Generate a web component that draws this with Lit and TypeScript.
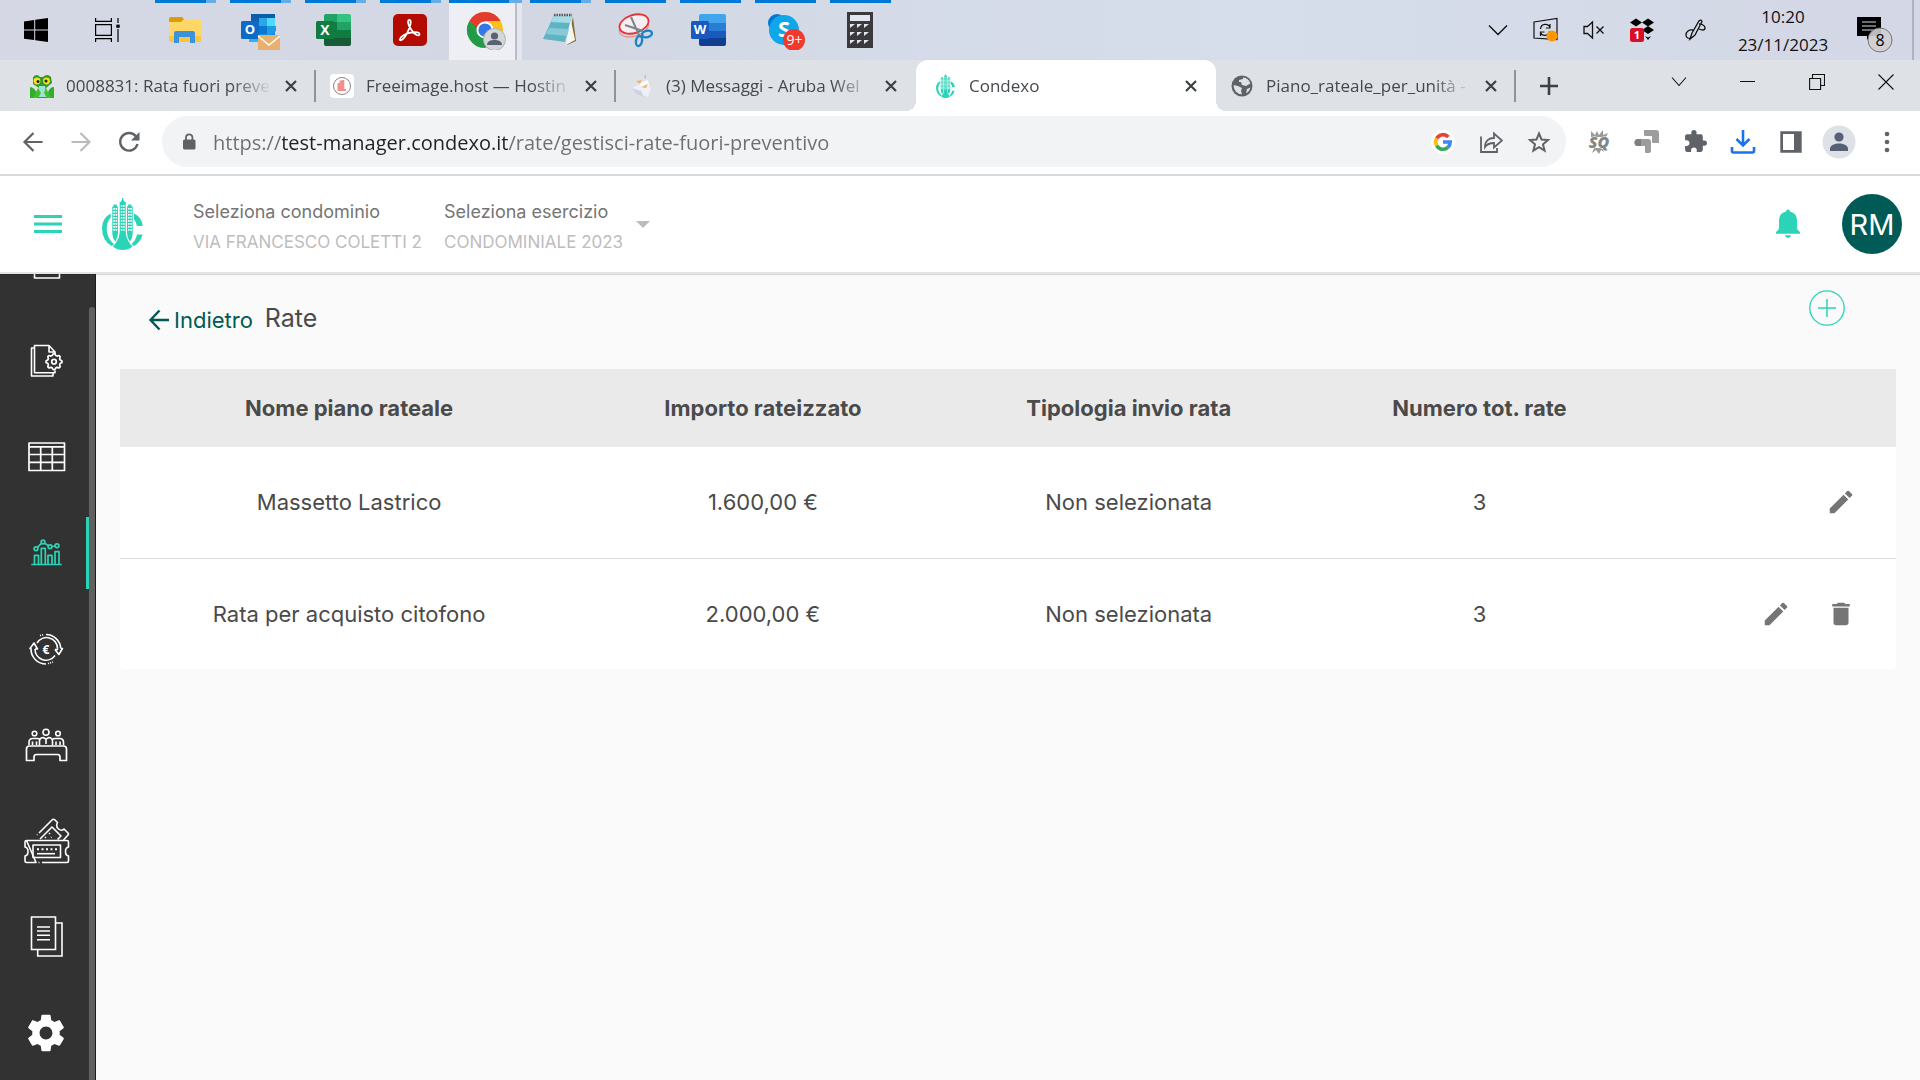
import { LitElement, html, css, svg, nothing, TemplateResult } from "lit";
import { customElement, property } from "lit/decorators.js";

/* ---------- taskbar pictograms (40 x 40) ---------- */

const windowsLogo = html`<svg width="24" height="24" viewBox="0 0 24 24"><path d="M0 3.400 10.200 2v9.500H0zM11.200 1.800 24 0v11.500H11.200zM0 12.500h10.200v9.600L0 20.700zM11.200 12.500H24V24l-12.800-1.800z"/></svg>`;

const taskView = html`<svg width="26" height="24" viewBox="0 0 26 24" fill="none" stroke="#000" stroke-width="1.200"><path d="M.6 0v3.400h15.800V0M.6 24v-3.400h15.800V24M.6 6.600h15.800v10.800H.6zM23 0v5M23 11v13"/><path d="M21.300 6.600h3.400v3.200h-3.400z" fill="#000" stroke="none"/></svg>`;

const folder = html`<svg width="40" height="40" viewBox="0 0 40 40"><path d="M4 9q0-2 2-2h11l2 2v5H4z" fill="#dd9b0b"/><path d="M4 12h12l3-3h15q2 0 2 2v19q0 2-2 2H6q-2 0-2-2z" fill="#ffd766"/><path d="M4 26h32v4q0 2-2 2H6q-2 0-2-2z" fill="#fcc53f"/><path d="M9 33V23q0-2 2-2h17q2 0 2 2v10h-5v-6H14v6z" fill="#3c93dd"/></svg>`;

const outlook = html`<svg width="40" height="40" viewBox="0 0 40 40"><path d="M11 4h24v28H9V17h2z" fill="#1490df"/><path d="M11 4h24v4H11z" fill="#0a5ea8"/><path d="M11 8h8v8h-8z" fill="#0f5fae"/><path d="M19 8h8v8h-8z" fill="#28a8ea"/><path d="M27 8h8v8h-8z" fill="#50d9ff"/><path d="M19 16h8v8h-8z" fill="#0b78d0"/><path d="M27 16h9v5l-9 6z" fill="#1f9be6"/><path d="M9 24h10v8H9z" fill="#30b4ef"/><rect x="1" y="11" width="18" height="18" rx="1.500" fill="#0d6ac6"/><text x="10" y="24" text-anchor="middle" font-size="13" font-weight="700" fill="#fff" font-family="Open Sans, sans-serif">O</text><path d="M18 25h22v16H18z" fill="#e8b06c"/><path d="m18 26 11 9 11-9" fill="none" stroke="#fff" stroke-width="1.500"/></svg>`;

const excel = html`<svg width="40" height="40" viewBox="0 0 40 40"><path d="M11 4h13v8H9V6q0-2 2-2z" fill="#21a366"/><path d="M22 4h12q2 0 2 2v6H22z" fill="#33c481"/><path d="M9 12h13v8H9z" fill="#107c41"/><path d="M22 12h14v8H22z" fill="#21a366"/><path d="M9 20h27v8H9z" fill="#107c41"/><path d="M9 28h27v6q0 2-2 2H11q-2 0-2-2z" fill="#185c37"/><rect x="1" y="11" width="18" height="18" rx="1.500" fill="#107c41"/><text x="10" y="24.500" text-anchor="middle" font-size="14" font-weight="700" fill="#fff" font-family="Open Sans, sans-serif">X</text></svg>`;

const acrobat = html`<svg width="40" height="40" viewBox="0 0 40 40"><rect x="3" y="4" width="34" height="32" rx="5" fill="#b30b00"/><path d="M20 9c-3 0-1 6 2 10 3 5 8 7 8 4s-12-2-17 2c-4 3-3 5-1 4 4-2 8-11 9-16 .5-3 0-4-1-4z" fill="none" stroke="#fff" stroke-width="1.800" transform="translate(-.5 1)"/></svg>`;

const chrome = html`<svg width="40" height="40" viewBox="0 0 40 40"><circle cx="19" cy="20" r="18" fill="#fbc116"/><path d="M3.400 11A18 18 0 0 0 19 38l8-13.500H11z" fill="#219a4a"/><path d="M3.400 11A18 18 0 0 1 34.600 11H19v9l-6-3z" fill="#e33b2e"/><path d="M3.400 11 11.200 24.500l3-8z" fill="#219a4a"/><path d="M4 10.500 11.500 20 19 11z" fill="#e33b2e"/><path d="M3.400 11 11.200 24.500l1-5z" fill="#219a4a"/><circle cx="19" cy="20" r="8.500" fill="#fff"/><circle cx="19" cy="20" r="6.600" fill="#3278e8"/><circle cx="28.500" cy="29.500" r="11" fill="#d4d6d8" stroke="#aeb1b5" stroke-width="1"/><circle cx="28.500" cy="26" r="3.600" fill="#586273"/><path d="M21 35c0-4 4-5 7.500-5s7.500 1 7.500 5z" fill="#586273"/></svg>`;

const notepad = html`<svg width="40" height="40" viewBox="0 0 40 40"><path d="m33 7 3 24-9 4z" fill="#8a6a2e"/><path d="m30 6 5 24-9 5z" fill="#f2f5f6"/><path d="M14 5h18l-7 27-22-3z" fill="#5fb4c4"/><path d="M14 5h18l-2 8-19-1z" fill="#a4dbe4"/><path d="M9 18 29 19l-2 7-21-2z" fill="#85cad6"/><path d="M14 5h18" stroke="#555" stroke-width="2.500" stroke-dasharray="1.500 1"/></svg>`;

const snipping = html`<svg width="40" height="40" viewBox="0 0 40 40" fill="none"><ellipse cx="19" cy="18" rx="15" ry="8" transform="rotate(-18 19 18)" stroke="#e98a8a" stroke-width="1.200"/><ellipse cx="19" cy="14" rx="15" ry="9" transform="rotate(-18 19 14)" fill="#f7eef2" stroke="#e33434" stroke-width="1.800"/><path d="m16 7 8 18M10 15l18 6" stroke="#7d858c" stroke-width="2"/><ellipse cx="24" cy="31" rx="3" ry="5" transform="rotate(12 24 31)" stroke="#1b82c5" stroke-width="2.400"/><ellipse cx="32" cy="24" rx="5" ry="3.200" transform="rotate(-15 32 24)" stroke="#1b82c5" stroke-width="2.400"/></svg>`;

const word = html`<svg width="40" height="40" viewBox="0 0 40 40"><path d="M11 4h23q2 0 2 2v7H9V6q0-2 2-2z" fill="#41a5ee"/><path d="M9 13h27v8H9z" fill="#2b7cd3"/><path d="M9 21h27v7H9z" fill="#185abd"/><path d="M9 28h27v6q0 2-2 2H11q-2 0-2-2z" fill="#103f91"/><rect x="1" y="11" width="18" height="18" rx="1.500" fill="#185abd"/><text x="10" y="24" text-anchor="middle" font-size="13" font-weight="700" fill="#fff" font-family="Open Sans, sans-serif">W</text></svg>`;

const skype = html`<svg width="40" height="40" viewBox="0 0 40 40"><circle cx="12" cy="13" r="9" fill="#0078d4"/><circle cx="26" cy="27" r="9" fill="#0078d4"/><circle cx="19" cy="20" r="15" fill="#10a7ea"/><text x="19" y="27" text-anchor="middle" font-size="22" font-weight="700" fill="#fff" font-family="Open Sans, sans-serif">S</text><circle cx="29" cy="30" r="11" fill="#f03a2e"/><text x="29.500" y="35" text-anchor="middle" font-size="14" fill="#fff" font-family="Open Sans, sans-serif">9+</text></svg>`;

const calculator = html`<svg width="40" height="40" viewBox="0 0 40 40"><path d="M7 2h26v36H7z" fill="#3a3a3c"/><path d="M10 5h20v6H10z" fill="#e3e6f0"/>${[14, 22, 30].map((y) => [10, 17, 24].map((x) => svg`<path d="M${x} ${y}h5l-5 4z" fill="#e3e6f0"/>`))}</svg>`;

/* ---------- notification area ---------- */

const trayChevron = html`<svg width="20" height="12" viewBox="0 0 20 12" fill="none" stroke="#111" stroke-width="1.400"><path d="m1 1.500 9 9 9-9"/></svg>`;
const traySync = html`<svg width="26" height="26" viewBox="0 0 26 26" fill="none" stroke="#111" stroke-width="1.200"><path d="M1 5 24 1.500v21L1 21z"/><path d="M7.500 12c.5-6 8-6 9.500-1.500M17 7v4h-4M16.500 14c-.5 5-7 6-9 1.500M7.500 19v-4h4"/><circle cx="19" cy="19" r="5.500" fill="#ff9800" stroke="none"/></svg>`;
const traySpeaker = html`<svg width="22" height="20" viewBox="0 0 22 20" fill="none" stroke="#111" stroke-width="1.300"><path d="M1 6.500h3.500L9.500 2v16l-5-4.500H1zM13.500 6.500l7 7M20.500 6.500l-7 7"/></svg>`;
const trayDropbox = html`<svg width="26" height="24" viewBox="0 0 26 24"><path d="m1 4.500 6-4 6 4-6 4zM13 4.500l6-4 6 4-6 4zM13 12l6-4 6 4-6 4zM16 18l3 1.500 3-1.500-3 4z"/><rect x="1" y="10" width="14" height="14" rx="2.500" fill="#d80f27"/><text x="8" y="21" text-anchor="middle" font-size="11" font-weight="700" fill="#fff" font-family="Open Sans, sans-serif">1</text></svg>`;
const trayPen = html`<svg width="22" height="22" viewBox="0 0 22 22" fill="none" stroke="#111" stroke-width="1.300"><path d="M5 20 7 14 14 2q2-2 3 .5L10 16zM14 5c5 0 6 3 6 4 0 3-4 2-6 1M8 11c-4-1-7 2-7 5s3 4 5 3"/></svg>`;
const trayNotes = html`<svg width="38" height="38" viewBox="0 0 38 38"><path d="M1 1h24v19H14l-3 4v-4H1z"/><path d="M6 6h14M6 10h14M6 14h14" stroke="#d6d9e5" stroke-width="1"/><circle cx="24" cy="24" r="12" fill="#cfcfd1" fill-opacity=".9" stroke="#777" stroke-width="1"/><text x="24" y="30" text-anchor="middle" font-size="16" fill="#000" font-family="Open Sans, sans-serif">8</text></svg>`;

/* ---------- browser icons ---------- */

const frog = html`<svg width="24" height="24" viewBox="0 0 24 24"><path d="M0 13q4 0 7 6l-1 5H0zM24 13q-4 0-6 5l1 6h5z" fill="#2faf2a"/><path d="M3 3q4-4 7 0h3q4-4 8 0l1 6-6 5 2 10H7l2-10-6-4z" fill="#2c9a2d"/><path d="M9 12h6l2 11H8z" fill="#9fe4d0"/><path d="m8 14 3 5-3 5H3zM16 14l-2 5 3 5h4z" fill="#3fc02f"/><circle cx="7" cy="7" r="3.400" fill="#f3e11c"/><circle cx="16.500" cy="7" r="3.400" fill="#f3e11c"/><circle cx="8" cy="7.500" r="1.500" fill="#222"/><circle cx="16" cy="7" r="1.500" fill="#222"/></svg>`;
const freeimage = html`<svg width="24" height="24" viewBox="0 0 24 24"><rect width="24" height="24" rx="4" fill="#fff"/><circle cx="12" cy="12" r="8.500" fill="none" stroke="#777" stroke-width=".9"/><path d="M7.500 9h2V6.500h2.300V6h2.500v9h1.700v2h-8.500z" fill="#f1918d"/></svg>`;
const aruba = html`<svg width="24" height="24" viewBox="0 0 24 24"><path d="M2 14 14 8l7 6-3 9-12-3z" fill="#eef0f7"/><path d="m2 14 9 3 3 6-8-3z" fill="#cdd3e3"/><path d="m10 9 8-3 1 6-8 1z" fill="#fff"/><path d="m6 7 6-1-2 4zM14 3l2-3v5zM11 13l7-3-2 4z" fill="#f0b273"/></svg>`;
const globe = html`<svg width="24" height="24" viewBox="0 0 24 24"><circle cx="12" cy="12" r="10.500" fill="#5f6368"/><path d="M13 3.500a8.500 8.500 0 0 1 7.300 6L16 12l-4-1-1-3h-2V6l4-1zM3.600 11l4.400 1 4 2-1 3 1 3.300A8.500 8.500 0 0 1 3.600 11zM20.400 13.500a8.500 8.500 0 0 1-4.400 5.800l1-4.300z" fill="#dee1e6"/></svg>`;

const closeGlyph = html`<svg width="12" height="12" viewBox="0 0 12 12" stroke="#3c4043" stroke-width="2.200"><path d="m1 1 10 10M11 1 1 11"/></svg>`;
const plusGlyph = html`<svg width="18" height="18" viewBox="0 0 18 18" stroke="#3c4043" stroke-width="2.600"><path d="M9 0v18M0 9h18"/></svg>`;
const winChevron = html`<svg width="16" height="16" viewBox="0 0 16 16" fill="none" stroke="#111" stroke-width="1.100"><path d="m1 3.500 7 8 7-8"/></svg>`;
const winMin = html`<svg width="16" height="16" viewBox="0 0 16 16" fill="none" stroke="#111"><path d="M0 7.500h15"/></svg>`;
const winRestore = html`<svg width="16" height="16" viewBox="0 0 16 16" fill="none" stroke="#111" stroke-width="1.100"><path d="M.6 4.500h11v11H.6zM3.500 4.500v-4h12v11h-4"/></svg>`;
const winClose = html`<svg width="16" height="16" viewBox="0 0 16 16" fill="none" stroke="#111" stroke-width="1.100"><path d="m.5.5 15 15M15.500.5l-15 15"/></svg>`;

const back = html`<svg width="22" height="22" viewBox="0 0 22 22" fill="none" stroke="#5f6368" stroke-width="2.200"><path d="M20.500 11H2.500M11.500 2l-9 9 9 9"/></svg>`;
const forward = html`<svg width="22" height="22" viewBox="0 0 22 22" fill="none" stroke="#babcbe" stroke-width="2.200"><path d="M1.500 11h18M10.500 2l9 9-9 9"/></svg>`;
const reload = html`<svg width="22" height="22" viewBox="0 0 22 22"><path d="M18 5.500A8.800 8.800 0 1 0 19.500 13" fill="none" stroke="#5f6368" stroke-width="2.400"/><path d="M21.500 1v8.500H13z" fill="#5f6368"/></svg>`;
const lock = html`<svg width="14" height="18" viewBox="0 0 14 18"><rect x="1" y="6.500" width="12.500" height="10" rx="1.500" fill="#5f6368"/><path d="M4 7V4.500a3.200 3.200 0 0 1 6.400 0V7" fill="none" stroke="#5f6368" stroke-width="1.800"/></svg>`;
const googleG = html`<svg width="24" height="24" viewBox="0 0 24 24"><circle cx="12" cy="12" r="12" fill="#fff"/><g fill="none" stroke-width="3.600"><path d="M17.400 6.900A7.300 7.300 0 0 0 5.700 8.400" stroke="#ea4335"/><path d="M5.700 8.400a7.300 7.300 0 0 0 0 7.200" stroke="#fbbc05"/><path d="M5.700 15.600a7.300 7.300 0 0 0 11.200 1.800" stroke="#34a853"/><path d="M12 12h7.200c0 2.200-.8 4-2.300 5.400" stroke="#4285f4"/></g></svg>`;
const share = html`<svg width="24" height="24" viewBox="0 0 24 24" fill="none" stroke="#5f6368" stroke-width="1.800"><path d="M2 6.500V22h16v-4"/><path d="M6 17c0-6 4-9 9-9V3.500l8 7-8 7V13c-4 0-7 1-9 4z"/></svg>`;
const star = html`<svg width="24" height="24" viewBox="0 0 24 24" fill="none" stroke="#5f6368" stroke-width="2"><path d="m12 3.500 2.500 6 6.500.5-5 4.300 1.600 6.400L12 17.200l-5.600 3.500L8 14.300 3 10l6.500-.5z"/></svg>`;
const extSq = html`<svg width="24" height="26" viewBox="0 0 24 26"><path d="m4 2 4 4 2-4 2 4 4-5v5l5-2-2 4H4zM5 24l2-5h9l1 4-3-2-2 4-3-4z" fill="#9a9a9a"/><text x="12" y="19" text-anchor="middle" font-size="16" font-weight="800" font-style="italic" fill="#858585" stroke="#fff" stroke-width="1" paint-order="stroke" font-family="Open Sans, sans-serif">SQ</text></svg>`;
const extArrow = html`<svg width="26" height="26" viewBox="0 0 26 26"><path d="M10 1h12q3 0 3 3v10h-6q-1 0-1-1V7h-7q-1 0-1-1z" fill="#9d9d9d"/><path d="M4 10h10q3 0 3 3v9q0 2-2 2h-3q-1 0-1-1v-6H4a3.500 3.500 0 0 1 0-7z" fill="#9d9d9d"/><path d="M4 10h3v7H4a3.500 3.500 0 0 1 0-7z" fill="#7f7f7f"/></svg>`;
const puzzle = html`<svg width="25" height="25" viewBox="0 0 24 24"><path d="M20.500 11H19V7c0-1.100-.9-2-2-2h-4V3.500a2.500 2.500 0 0 0-5 0V5H4c-1.100 0-2 .9-2 2v3.800h1.500a2.700 2.700 0 0 1 0 5.400H2V20c0 1.100.9 2 2 2h3.800v-1.500a2.700 2.700 0 0 1 5.400 0V22H17c1.100 0 2-.9 2-2v-4h1.500a2.500 2.500 0 0 0 0-5z" fill="#5f6368"/></svg>`;
const download = html`<svg width="26" height="26" viewBox="0 0 26 26" fill="none" stroke="#1a73e8"><path d="M13 1v15M6.500 10l6.500 6.500 6.500-6.500" stroke-width="2.600"/><path d="M2 18v4q0 1.500 1.500 1.500h19q1.500 0 1.500-1.500v-4" stroke-width="2.600"/></svg>`;
const sidePanel = html`<svg width="24" height="24" viewBox="0 0 24 24"><path d="M1.300 1.300h21.400v21.400H1.300zM4 4v16h11V4z" fill="#5f6368" fill-rule="evenodd"/></svg>`;
const profile = html`<svg width="34" height="34" viewBox="0 0 34 34"><circle cx="17" cy="17" r="16.500" fill="#dee1e6"/><circle cx="17" cy="12" r="4.600" fill="#566177"/><path d="M8 26v-2c0-4 5-5.500 9-5.500s9 1.500 9 5.500v2z" fill="#566177"/></svg>`;
const dots = html`<svg width="6" height="22" viewBox="0 0 6 22" fill="#5f6368"><circle cx="3" cy="3" r="2.300"/><circle cx="3" cy="11" r="2.300"/><circle cx="3" cy="19" r="2.300"/></svg>`;

/* ---------- application icons ---------- */

const logoTowers = [
  [10.300, 7, 32], [25, 7, 32], [17.800, 4, 32],
];
const logoMark = (w: number, h: number) => html`<svg width=${w} height=${h} viewBox="0 0 41 52"><g fill="#2bd4b7">
  <path d="M17.700 35V4h1.300V2.500h1V0h1.400v2.500h1V4h1.300v31zM10.300 8.500h1.200V6.500h3.300v2H16V35q0 4-2.500 8.500-3.200-3-3.200-9zM25 35V8.500h1.200v-2h3.300v2h1.200v26q0 6-3 9Q25 39 25 35z"/>
  <path d="M17.700 34.500h6q.8 8.500 7 14-4.500 3.500-10 3.500t-10-3.500q6.200-5.500 7-14z"/>
  <path d="M8.700 15.500v4Q4.700 24 4.700 31q0 9 7.500 15.500L9.500 48Q0 42 0 30 0 20 8.700 15.500zM32 15.500q7.500 3 8.700 12.500H35q-.5-4-3-6.500zM35 36.500h5.500q-1.500 7.500-8.500 11.500l-2.500-2q4.500-4 5.500-9.500z"/></g>
  <g fill="#fff">${logoTowers.map(([x, top, end]) => {
    const marks = [];
    for (let y = top + 3; y < end; y += 3) for (const c of [1, 3.300]) marks.push(svg`<rect x=${x + c} y=${y} width="1.600" height="1.700"/>`);
    return marks;
  })}</g></svg>`;

const hamburger = html`<svg width="28" height="18" viewBox="0 0 28 18" fill="#2bd4b7"><path d="M0 0h28v3H0zM0 7.500h28v3H0zM0 15h28v3H0z"/></svg>`;
const caret = html`<svg width="14" height="7" viewBox="0 0 14 7" fill="#bcbcbc"><path d="M0 0h14L7 7z"/></svg>`;
const bell = html`<svg width="24" height="30" viewBox="0 0 24 30" fill="#2bd4b7"><path d="M10 2.500a2 2 0 0 1 4 0q7 1.500 7 9V19q0 2 3 4v1.800H0V23q3-2 3-4v-7.500q0-7.500 7-9zM9 26.300h6q-.5 2.700-3 2.700t-3-2.700z"/></svg>`;
const arrowBack = html`<svg width="22" height="22" viewBox="0 0 22 22" fill="none" stroke="#005a55" stroke-width="2.400"><path d="M21 11H3M11.500 1.500 2.500 11l9 9.500"/></svg>`;
const addCircle = html`<svg width="36" height="36" viewBox="0 0 36 36" fill="none" stroke="#2bd4b7" stroke-width="1.300"><circle cx="18" cy="18" r="17.200"/><path d="M18 9v18M9 18h18" stroke-width="1.500"/></svg>`;
const pencil = html`<svg width="30" height="30" viewBox="0 0 24 24" fill="#757575"><path d="M3 17.250V21h3.750L17.810 9.940l-3.750-3.750L3 17.250zM20.710 7.040a.996.996 0 0 0 0-1.410l-2.340-2.340a.996.996 0 0 0-1.410 0l-1.830 1.830 3.750 3.750 1.830-1.830z"/></svg>`;
const trash = html`<svg width="30" height="30" viewBox="0 0 24 24" fill="#757575"><path d="M6 19c0 1.100.9 2 2 2h8c1.100 0 2-.9 2-2V7H6v12zM19 4h-3.500l-1-1h-5l-1 1H5v2h14V4z"/></svg>`;

const gearTeeth = (cx: number, cy: number, r: number) => {
  const p: string[] = [];
  for (let i = 0; i < 32; i++) {
    const a = ((i - 0.5) * Math.PI) / 16;
    const q = i % 4 < 2 ? r : r - 1.600;
    p.push(`${(cx + q * Math.cos(a)).toFixed(2)} ${(cy + q * Math.sin(a)).toFixed(2)}`);
  }
  return `M${p.join("L")}Z`;
};

const navIcon = (body: TemplateResult) =>
  html`<svg width="48" height="48" viewBox="0 0 48 48" fill="none" stroke="currentColor" stroke-width="1.600" stroke-linejoin="round">${body}</svg>`;

const navHouse = navIcon(svg`<path d="M12.500 14h25v23h-25zM17 20h16M17 26h16"/>`);
const navDocGear = navIcon(svg`<path d="M12 11H9.500v28H31v-3"/><path d="M25 35.700H12.500V8.500h14.500l6 6.500v2M27 8.500V15h6M33 33.500v2.200h-8"/><path d=${gearTeeth(32, 24.700, 8)} fill="#323232" stroke-width="1.700"/><circle cx="32" cy="24.700" r="2.300" stroke-width="1.700"/>`);
const navTable = navIcon(svg`<path d="M7 10h35.500v27.500H7zM7 13.800h35.500M7 21.500h35.500M7 29.300h35.500M18.700 14v23.500M30.300 14v23.500" stroke-width="1.700"/>`);
const navChart = navIcon(svg`<g stroke-width="1.700"><path d="M9.300 35.500h30.400M12.500 35.500v-9.200h4v9.200M19.300 35.500V19.300h4v16.200M26 35.500v-9.200h4v9.200M33 35.500V22.700h4v12.800M15.300 18.300l4.200-3.900M22.600 14.300l3.600 2.200M30 17.500l3-.5"/><circle cx="14" cy="19.700" r="1.900"/><circle cx="21" cy="13" r="1.900"/><circle cx="28" cy="17.700" r="1.900"/><circle cx="35" cy="16.700" r="1.900"/></g>`);
const navEuro = navIcon(svg`<path d="M24 9.500a15 15 0 0 1 14.800 14M24 39A15 15 0 0 1 9 23.500"/><path d="M18 10.500l4-.8M26 38.600l5-1.600" stroke-dasharray="1 1.200"/><path d="M15 18a11 11 0 0 1 20.500 5.500M33 30.500A11 11 0 0 1 13 24"/><path d="M33 24.500h2.500v-1M38.800 23.500h1.700l-3.700 6-3.800-5M13 24h2.500L12 18l-4 5.500H9.500"/><text x="24" y="28.500" text-anchor="middle" font-size="12" font-weight="700" fill="currentColor" stroke="none" font-family="Open Sans, sans-serif">€</text>`);
const navMeeting = navIcon(svg`<circle cx="24" cy="11.300" r="3"/><circle cx="12.500" cy="12.500" r="2.300"/><circle cx="36" cy="12.500" r="2.300"/><path d="M17.500 24.500V20q0-3 3.500-3.500l3 1.500 3-1.500q3.500.5 3.500 3.500v4.500M24 18v5M7 24v-3q0-3 3-3.500h5.500q1.500 0 2 1M41.500 24v-3q0-3-3-3.500H33q-1.500 0-2 1M10.500 24v-3.500M14.500 24v-3.500M34 24v-3.500M38 24v-3.500"/><path d="M4.500 39.500V28q0-3 3-3h34q3 0 3 3v11.500H38V36q0-2.500-2.500-2.500h-21q-2.500 0-2.500 2.500v3.500z" stroke-width="1.700"/>`);
const navTickets = navIcon(svg`<path d="M17 16 30 3q1.500-1.500 3 0l2.500 2.500q-2 4 1 6.500t5.500 0l4 4q1 1 0 2L41.500 23M15 18l.5-.5"/><path d="m18 22 12-12 9 9-3.500 3.500M23 21l1-1M27 17l1-1M29 20.500l.5-.5"/><path d="M4.500 23.500h40.500q1.500 0 1.500 1.500v5q-3 .5-3 4.500t3 4.500v5q0 1.500-1.500 1.500H20M17.500 45.500h-1M14 45.500H4.500Q3 45.500 3 44v-5q3-.5 3-4.500T3 30v-5q0-1.500 1.500-1.500z"/><path d="M11 28h27.500v12.500H11z"/><path d="M15 32.300h20" stroke-dasharray="2 2.500" stroke-width="2"/><path d="M15 36.700h18"/>`);
const navDocs = navIcon(svg`<g stroke-linejoin="miter"><path d="M9.500 4h24v32.500h-24zM34 10h6v33H15.700v-6M15 14h13M15 18h13M15 22.300h13M15 26.700h13"/></g>`);
const navSettings = html`<svg width="44" height="44" viewBox="0 0 24 24" fill="currentColor"><path d="M19.430 12.980c.04-.32.07-.64.07-.98s-.03-.66-.07-.98l2.110-1.650c.19-.15.24-.42.12-.64l-2-3.460c-.12-.22-.39-.3-.61-.22l-2.490 1c-.52-.4-1.080-.73-1.690-.98l-.38-2.650A.488.488 0 0 0 14 2h-4c-.25 0-.46.18-.49.42l-.38 2.650c-.61.25-1.170.59-1.690.98l-2.490-1c-.23-.09-.49 0-.61.22l-2 3.460c-.13.22-.07.49.12.64l2.110 1.650c-.04.32-.07.65-.07.98s.03.66.07.98l-2.110 1.650c-.19.15-.24.42-.12.64l2 3.460c.12.22.39.3.61.22l2.490-1c.52.4 1.080.73 1.690.98l.38 2.650c.03.24.24.42.49.42h4c.25 0 .46-.18.49-.42l.38-2.650c.61-.25 1.170-.59 1.690-.98l2.490 1c.23.09.49 0 .61-.22l2-3.460c.12-.22.07-.49-.12-.64l-2.110-1.650zM12 15.500c-1.930 0-3.500-1.570-3.500-3.500s1.570-3.500 3.500-3.500 3.500 1.570 3.500 3.500-1.570 3.500-3.500 3.500z"/></svg>`;

const shared = css`
  * { box-sizing: border-box; }
  button { display: flex; align-items: center; justify-content: center; padding: 0; border: 0; background: none; font: inherit; color: inherit; cursor: pointer; }
  svg { display: block; flex: none; }
`;

/* ---------- Windows taskbar ---------- */

@customElement("desk-taskbar")
class DeskTaskbar extends LitElement {
  static styles = [shared, css`
    :host { display: flex; height: 60px; background: linear-gradient(90deg, #d5d8e4, #d3d7e4 30%, #d6deeb 65%, #d4d7e5); font-family: "Open Sans", sans-serif; color: #111; }
    .apps { display: flex; flex: 1; }
    .system { width: 72px; }
    .gap { width: 11px; }
    .app { width: 61px; margin-right: 14px; padding-right: 2px; border-top: 3px solid #0078d7; }
    .app svg { margin-bottom: 3px; }
    .multi { border-image: linear-gradient(90deg, #0078d7 80%, #66ade8 80%) 3; }
    .current { width: 73px; margin: 0 8px 0 -6px; padding: 0; background: linear-gradient(90deg, #eeeff5 66px, #b9bcc7 66px, #b9bcc7 68px, #e4e6ee 68px); }
    .tray { display: flex; align-items: center; }
    .item { height: 60px; width: 48px; }
    .pen { width: 54px; padding-left: 6px; }
    .clock { display: grid; align-content: center; width: 126px; text-align: center; font-size: 17px; line-height: 28px; padding-top: 2px; }
    .notes { width: 66px; height: 60px; padding: 9px 0 0 10px; justify-content: flex-start; }
    .edge { width: 8px; height: 60px; border-left: 2px solid #aeb1be; }
  `];
  render() {
    const app = (label: string, icon: unknown, kind = "") => html`<button class="app ${kind}" aria-label=${label}>${icon}</button>`;
    return html`
      <nav class="apps" aria-label="Barra delle applicazioni">
        <button class="system" aria-label="Start">${windowsLogo}</button>
        <button class="system" aria-label="Visualizzazione attività">${taskView}</button>
        <span class="gap"></span>
        ${app("Esplora file", folder, "multi")}
        ${app("Outlook", outlook, "multi")}
        ${app("Excel", excel, "multi")}
        ${app("Acrobat", acrobat, "multi")}
        ${app("Chrome", chrome, "multi current")}
        ${app("Blocco note", notepad, "multi")}
        ${app("Strumento di cattura", snipping)}
        ${app("Word", word)}
        ${app("Skype", skype)}
        ${app("Calcolatrice", calculator)}
      </nav>
      <div class="tray">
        <button class="item" aria-label="Icone nascoste">${trayChevron}</button>
        <button class="item" aria-label="Aggiornamenti">${traySync}</button>
        <button class="item" aria-label="Volume">${traySpeaker}</button>
        <button class="item" aria-label="Dropbox">${trayDropbox}</button>
        <button class="item pen" aria-label="Penna">${trayPen}</button>
        <time class="clock"><span>10:20</span><span>23/11/2023</span></time>
        <button class="notes" aria-label="Notifiche">${trayNotes}</button>
        <span class="edge"></span>
      </div>`;
  }
}

/* ---------- browser chrome ---------- */

@customElement("browser-bar")
class BrowserBar extends LitElement {
  static styles = [shared, css`
    :host { display: block; font-family: "Open Sans", sans-serif; color: #45494d; }
    .strip { display: flex; height: 51px; padding-left: 16px; background: #dee1e6; }
    .tab { display: flex; align-items: center; width: 300px; padding: 0 11px 0 14px; }
    .tab.ruled { padding-right: 9px; border-right: 2px solid #909398; border-image: linear-gradient(transparent 11px, #909398 11px, #909398 41px, transparent 41px) 2; }
    .tab.active { position: relative; background: #fff; border-radius: 12px 12px 0 0; padding-left: 17px; }
    .tab.active::before, .tab.active::after { content: ""; position: absolute; bottom: 0; width: 10px; height: 10px; }
    .tab.active::before { right: 100%; background: radial-gradient(circle at 0 0, #dee1e6 10px, #fff 10px); }
    .tab.active::after { left: 100%; background: radial-gradient(circle at 100% 0, #dee1e6 10px, #fff 10px); }
    .icon { display: grid; place-items: center; width: 24px; }
    .title { flex: 1; height: 51px; margin: 0 0 0 12px; font-size: 17px; justify-content: flex-start; white-space: nowrap; -webkit-mask: linear-gradient(90deg, #000 166px, transparent 206px); }
    .close { width: 28px; height: 28px; }
    .new { width: 66px; }
    .controls { display: flex; margin-left: auto; height: 43px; }
    .controls button { width: 69px; }
    .tools { display: flex; align-items: center; height: 65px; padding: 0 9px 2px 9px; background: #fff; border-bottom: 2px solid #d9dadc; }
    .tools button { width: 48px; height: 48px; }
    .omni { display: flex; flex: 1; align-items: center; height: 51px; margin: 0 9px; padding: 0 3px 0 20px; border-radius: 26px; background: #f1f3f4; }
    .url { flex: 1; min-width: 0; height: 40px; margin-left: 17px; padding: 1px 0 0; border: 0; outline: 0; font: 20px "Open Sans", sans-serif; color: transparent; background: linear-gradient(90deg, #6b6f73 69px, #202124 69px, #202124 295px, #6b6f73 295px); -webkit-background-clip: text; background-clip: text; }
  `];
  render() {
    const tab = (icon: unknown, title: string, kind: string) => html`
      <div class="tab ${kind}"><span class="icon">${icon}</span><button class="title">${title}</button><button class="close" aria-label="Chiudi scheda">${closeGlyph}</button></div>`;
    return html`
      <div class="strip">
        ${tab(frog, "0008831: Rata fuori preve", "ruled")}
        ${tab(freeimage, "Freeimage.host — Hostin", "ruled")}
        ${tab(aruba, "(3) Messaggi - Aruba Wel", "")}
        ${tab(logoMark(19, 24), "Condexo", "active")}
        ${tab(globe, "Piano_rateale_per_unità -", "ruled")}
        <button class="new" aria-label="Nuova scheda">${plusGlyph}</button>
        <div class="controls">
          <button aria-label="Cerca schede">${winChevron}</button>
          <button aria-label="Riduci">${winMin}</button>
          <button aria-label="Ripristina">${winRestore}</button>
          <button aria-label="Chiudi">${winClose}</button>
        </div>
      </div>
      <div class="tools">
        <button aria-label="Indietro">${back}</button>
        <button aria-label="Avanti">${forward}</button>
        <button aria-label="Ricarica">${reload}</button>
        <div class="omni">
          ${lock}
          <input class="url" type="text" aria-label="Indirizzo" value="https://test-manager.condexo.it/rate/gestisci-rate-fuori-preventivo" />
          <button aria-label="Google">${googleG}</button>
          <button aria-label="Condividi">${share}</button>
          <button aria-label="Preferiti">${star}</button>
        </div>
        <button aria-label="Estensione SQ">${extSq}</button>
        <button aria-label="Estensione">${extArrow}</button>
        <button aria-label="Estensioni">${puzzle}</button>
        <button aria-label="Download">${download}</button>
        <button aria-label="Pannello laterale">${sidePanel}</button>
        <button aria-label="Profilo">${profile}</button>
        <button aria-label="Menu">${dots}</button>
      </div>`;
  }
}

/* ---------- Condexo header ---------- */

@customElement("site-header")
class SiteHeader extends LitElement {
  static styles = [shared, css`
    :host { display: flex; align-items: center; height: 96px; padding: 0 18px 0 34px; background: #fff; box-shadow: 0 2px 0 #e4e4e4, 0 3px 1px rgba(0, 0, 0, .12); }
    .logo { margin: 0 50px 0 40px; }
    .field { display: grid; margin-right: 22px; padding-top: 5px; }
    .field label { font-size: 18px; line-height: 31px; color: #757575; }
    .field select { appearance: none; margin: 0; padding: 0; border: 0; background: none; font: inherit; font-size: 17px; line-height: 31px; height: 31px; color: #bdbdbd; opacity: 1; }
    .caret { margin-left: -10px; }
    .bell { margin: 0 42px 0 auto; }
    .avatar { width: 60px; height: 60px; border-radius: 50%; background: #005a55; color: #fff; font-size: 29px; }
  `];
  render() {
    return html`
      <button aria-label="Menu">${hamburger}</button>
      <a class="logo" href="#" aria-label="Condexo">${logoMark(41, 52)}</a>
      <div class="field"><label for="condominio">Seleziona condominio</label><select id="condominio"><option>VIA FRANCESCO COLETTI 2</option></select></div>
      <div class="field"><label for="esercizio">Seleziona esercizio</label><select id="esercizio"><option>CONDOMINIALE 2023</option></select></div>
      <span class="caret">${caret}</span>
      <button class="bell" aria-label="Notifiche">${bell}</button>
      <button class="avatar">RM</button>`;
  }
}

/* ---------- side navigation ---------- */

@customElement("side-nav")
class SideNav extends LitElement {
  static styles = [shared, css`
    :host { display: flex; min-height: 0; overflow: hidden; background: #323232; color: #fff; border-right: 1px solid #1e1e1e; }
    .list { display: flex; flex: 1; flex-direction: column; justify-content: flex-end; gap: 24px; padding-bottom: 11px; }
    .item { flex: none; height: 72px; padding-left: 5px; border-right: 3px solid transparent; }
    .selected { color: #2bd4b7; border-color: #2bd4b7; }
    .thumb { width: 6px; margin-top: 35px; border-radius: 3px 3px 0 0; background: #606060; }
  `];
  @property() current = "Rate";
  render() {
    const items: [string, unknown][] = [
      ["Condominio", navHouse], ["Configurazione", navDocGear], ["Tabelle", navTable], ["Rate", navChart],
      ["Pagamenti", navEuro], ["Assemblee", navMeeting], ["Ticket", navTickets], ["Documenti", navDocs], ["Impostazioni", navSettings],
    ];
    return html`
      <nav class="list">${items.map(([label, icon]) => html`
        <button class="item ${label === this.current ? "selected" : ""}" aria-label=${label}>${icon}</button>`)}</nav>
      <span class="thumb"></span>`;
  }
}

/* ---------- instalment plans ---------- */

interface Plan { name: string; amount: string; delivery: string; count: number; removable: boolean; }

@customElement("plans-page")
class PlansPage extends LitElement {
  static styles = [shared, css`
    :host { display: block; min-width: 0; padding: 0 24px; background: #fafafa; color: #4a4a4a; }
    .head { display: flex; align-items: flex-start; height: 97px; padding: 18px 51px 0 28px; }
    .back { display: flex; align-items: center; gap: 4px; height: 36px; margin-top: 12px; font-size: 22px; color: #005a55; text-decoration: none; }
    h1 { flex: 1; margin: 10px 0 0 12px; font-size: 25px; line-height: 36px; font-weight: 400; }
    table { width: 100%; table-layout: fixed; border-collapse: collapse; background: #fff; border-radius: 4px; font-size: 22px; text-align: center; }
    .c1 { width: 25.8%; } .c2 { width: 20.8%; } .c3 { width: 20.4%; } .c4 { width: 19.1%; }
    th { height: 78px; padding: 0; background: #eaeaea; font-weight: 700; }
    td { height: 111px; padding: 0; }
    .row + .row td { border-top: 1px solid #dedede; }
    .actions { display: flex; align-items: center; justify-content: flex-end; gap: 35px; padding-right: 40px; }
  `];
  plans: Plan[] = [
    { name: "Massetto Lastrico", amount: "1.600,00 €", delivery: "Non selezionata", count: 3, removable: false },
    { name: "Rata per acquisto citofono", amount: "2.000,00 €", delivery: "Non selezionata", count: 3, removable: true },
  ];
  render() {
    return html`
      <div class="head">
        <a class="back" href="#">${arrowBack}<span>Indietro</span></a>
        <h1>Rate</h1>
        <button aria-label="Aggiungi">${addCircle}</button>
      </div>
      <table>
        <colgroup><col class="c1" /><col class="c2" /><col class="c3" /><col class="c4" /><col /></colgroup>
        <thead><tr><th>Nome piano rateale</th><th>Importo rateizzato</th><th>Tipologia invio rata</th><th>Numero tot. rate</th><th></th></tr></thead>
        <tbody>${this.plans.map((p) => html`
          <tr class="row"><td>${p.name}</td><td>${p.amount}</td><td>${p.delivery}</td><td>${p.count}</td>
            <td><div class="actions"><button aria-label="Modifica">${pencil}</button>${p.removable ? html`<button aria-label="Elimina">${trash}</button>` : nothing}</div></td></tr>`)}
        </tbody>
      </table>`;
  }
}

@customElement("app-root")
class AppRoot extends LitElement {
  static styles = css`
    :host { display: grid; grid-template-rows: auto auto auto minmax(0, 1fr); height: 100vh; overflow: hidden; font-family: Inter, "Open Sans", sans-serif; }
    .header { z-index: 1; }
    .body { display: grid; grid-template-columns: 96px minmax(0, 1fr); min-height: 0; }
  `;
  render() {
    return html`
      <desk-taskbar></desk-taskbar>
      <browser-bar></browser-bar>
      <site-header class="header"></site-header>
      <div class="body"><side-nav></side-nav><plans-page></plans-page></div>`;
  }
}
